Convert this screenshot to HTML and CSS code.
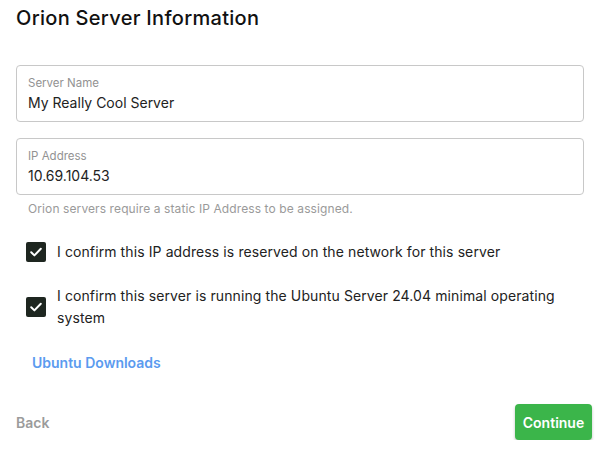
FILE: index.html
```html
<!DOCTYPE html>
<html>
<head>
<meta charset="utf-8">
<link rel="stylesheet" href="styles.css">
</head>
<body>
<div class="page">
  <h1 class="title">Orion Server Information</h1>
  <div class="field">
    <div class="field-label">Server Name</div>
    <div class="field-value">My Really Cool Server</div>
  </div>
  <div class="field field-ip">
    <div class="field-label">IP Address</div>
    <div class="field-value">10.69.104.53</div>
  </div>
  <div class="helper">Orion servers require a static IP Address to be assigned.</div>
  <div class="check-row check-one">
    <span class="box"><svg width="14" height="14" viewBox="0 0 14 14"><path d="M2.2 7.3 L5.4 10.4 L11.8 3.8" fill="none" stroke="#fff" stroke-width="2" stroke-linecap="round" stroke-linejoin="round"/></svg></span>
    <span class="check-text">I confirm this IP address is reserved on the network for this server</span>
  </div>
  <div class="check-row check-two">
    <span class="box"><svg width="14" height="14" viewBox="0 0 14 14"><path d="M2.2 7.3 L5.4 10.4 L11.8 3.8" fill="none" stroke="#fff" stroke-width="2" stroke-linecap="round" stroke-linejoin="round"/></svg></span>
    <span class="check-text">I confirm this server is running the Ubuntu Server 24.04 minimal operating system</span>
  </div>
  <a class="link">Ubuntu Downloads</a>
  <div class="actions">
    <span class="back">Back</span>
    <span class="continue">Continue</span>
  </div>
</div>
</body>
</html>
```
FILE: styles.css
```css
* { box-sizing: border-box; }
html, body { margin: 0; padding: 0; background: #fff; }
body {
  font-family: Inter, "Noto Sans", sans-serif;
  color: #222;
}
.page {
  width: 605px;
  padding: 6px 13px 0 16px;
  display: flex;
  flex-direction: column;
}
.title {
  margin: 0;
  font-size: 20px;
  font-weight: 500;
  line-height: 25px;
  color: #111;
  letter-spacing: 0.3px;
}
.field {
  margin-top: 34px;
  width: 568px;
  height: 57px;
  border: 1px solid #c8c8c8;
  border-radius: 4px;
  padding: 9px 11px 0;
}
.field-ip { margin-top: 16px; }
.field-label {
  font-size: 11.5px;
  line-height: 16px;
  color: #929292;
}
.field-value {
  font-size: 14px;
  line-height: 20px;
  margin-top: 2px;
  color: #222;
}
.helper {
  margin-top: 6px;
  padding-left: 12px;
  font-size: 12px;
  line-height: 16px;
  color: #9a9a9a;
  letter-spacing: 0.1px;
}
.check-row {
  display: flex;
  align-items: center;
  gap: 11px;
  padding-left: 10px;
  width: 568px;
}
.check-one { margin-top: 24px; }
.check-two { margin-top: 22px; }
.box {
  flex: none;
  width: 20px;
  height: 20px;
  background: #1e2620;
  border-radius: 2px;
  display: flex;
  align-items: center;
  justify-content: center;
}
.box svg { display: block; }
.check-text {
  font-size: 14px;
  line-height: 22px;
  color: #222;
  letter-spacing: 0.1px;
}
.link {
  margin-top: 24px;
  padding-left: 16px;
  font-size: 14px;
  line-height: 20px;
  font-weight: 600;
  color: #5b9bef;
}
.actions {
  margin-top: 31px;
  width: 576px;
  display: flex;
  justify-content: space-between;
  align-items: center;
}
.back {
  font-size: 14px;
  font-weight: 600;
  color: #9b9b9b;
}
.continue {
  width: 77px;
  height: 36px;
  background: #3bb54a;
  border-radius: 4px;
  color: #fff;
  font-size: 14px;
  font-weight: 600;
  display: flex;
  align-items: center;
  justify-content: center;
  box-shadow: 0 2px 3px rgba(0,0,0,0.25);
}
```
